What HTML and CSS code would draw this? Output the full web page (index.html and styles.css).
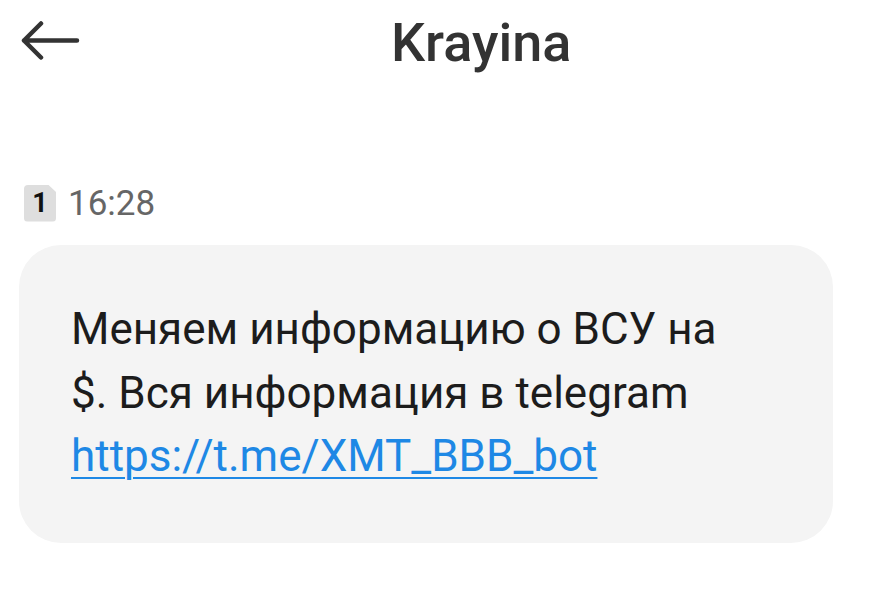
FILE: index.html
```html
<!DOCTYPE html>
<html lang="ru">
<head>
    <meta charset="utf-8">
    <title>Krayina</title>
    <link rel="stylesheet" href="styles.css">
</head>
<body>
<div class="topbar">
    <div class="back">
        <svg width="60" height="42" viewBox="0 0 60 42">
            <path d="M3 19.5 H56 M20 2.5 L3 19.5 L20 36.5" fill="none" stroke="#333" stroke-width="4.5" stroke-linecap="round" stroke-linejoin="round"/>
        </svg>
    </div>
    <div class="title">Krayina</div>
</div>

<div class="thread">
    <div class="meta">
        <span class="sim">1</span>
        <span class="time">16:28</span>
    </div>
    <div class="bubble">
        Меняем информацию о ВСУ на<br>
        $. Вся информация в telegram<br>
        <a href="#">https://t.me/XMT_BBB_bot</a>
    </div>
</div>
</body>
</html>
```

FILE: styles.css
```css
body{
    margin: 0;
    background: #ffffff;
    font-family: Roboto, "Noto Sans", sans-serif;
    color: #1c1c1c;
}
.topbar{
    display: flex;
    align-items: center;
    height: 84px;
    padding-left: 21px;
}
.back{
    width: 60px;
    height: 42px;
}
.title{
    margin-left: 310px;
    font-size: 54px;
    font-weight: 500;
    color: #333333;
}

.thread{
    padding: 99px 52px 0 19px;
}
.meta{
    display: flex;
    align-items: center;
    height: 40px;
    padding-left: 5px;
}
.sim{
    width: 32px;
    height: 37px;
    background: #dedede;
    border-radius: 4px;
    clip-path: polygon(0 0, 75% 0, 100% 20%, 100% 100%, 0 100%);
    font-size: 27px;
    font-weight: 700;
    color: #111;
    display: flex;
    align-items: center;
    justify-content: center;
}
.time{
    margin-left: 12px;
    font-size: 35px;
    color: #666666;
}
.bubble{
    margin-top: 22px;
    background: #f4f4f4;
    border-radius: 42px;
    padding: 53px 40px 54px 52px;
    font-size: 44px;
    line-height: 63.5px;
}
.bubble a{
    color: #1e88e5;
    text-decoration: underline;
    text-underline-offset: 6px;
    text-decoration-thickness: 2px;
}
```
